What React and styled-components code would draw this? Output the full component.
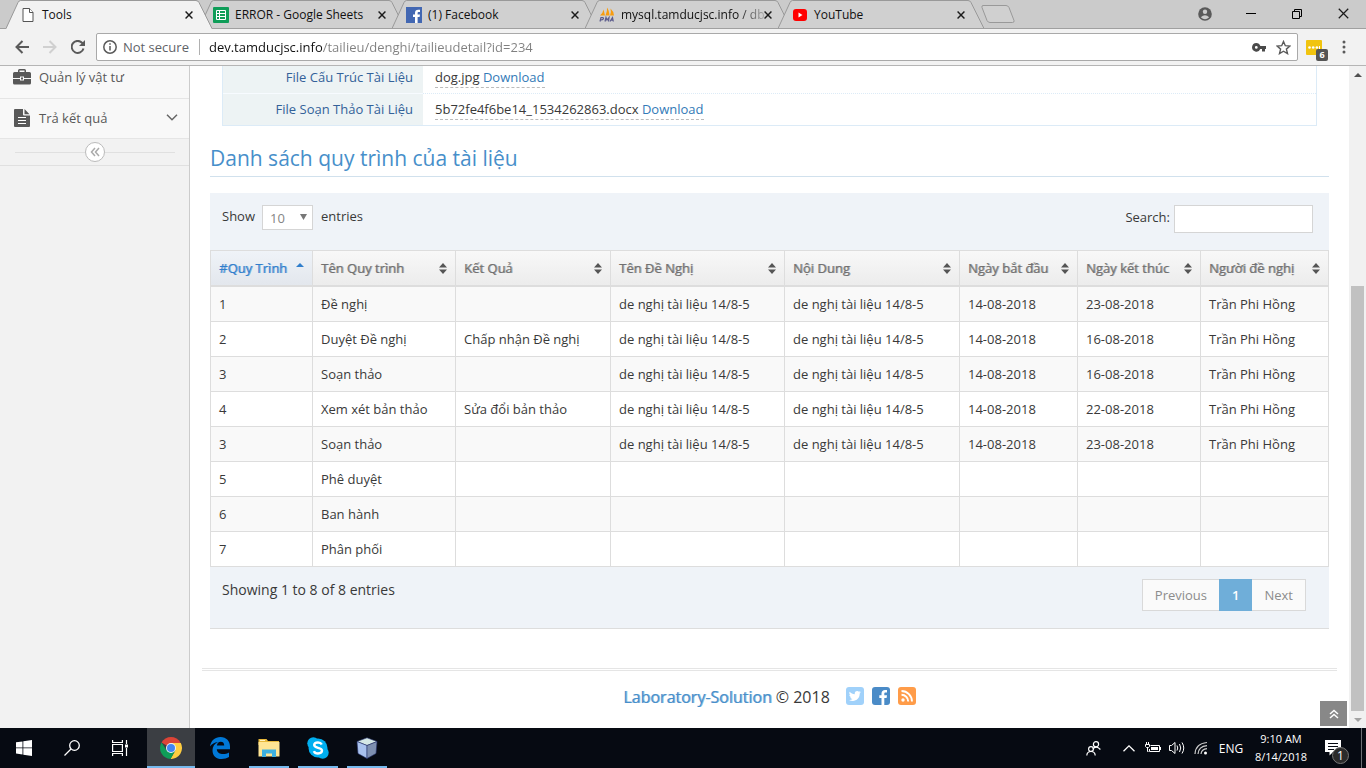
import React from 'react';
import styled, { createGlobalStyle, css } from 'styled-components';

const GlobalStyle = createGlobalStyle`
  *, *::before, *::after { box-sizing: border-box; }
  body { margin: 0; background: #fff; }
  body, button, input, select { font-family: "Open Sans", "Noto Sans", sans-serif; font-size: 13px; }
  button { border: 0; padding: 0; margin: 0; background: none; color: inherit; }
  svg { display: block; flex: none; }
`;

const Screen = styled.div`
  min-height: 100vh;
  display: flex;
  flex-direction: column;
  color: #393939;
  line-height: 20px;
`;

/* ---------- browser window ---------- */

const TabStrip = styled.header`
  display: flex;
  height: 29px;
  padding-left: 6px;
  background: #cbcbcb;
  border-bottom: 1px solid #a0a0a0;
`;

const TabBox = styled.div`
  position: relative;
  flex: 0 1 193px;
  min-width: 0;
  height: 29px;
  z-index: ${(p) => (p.$active ? 2 : 1)};
`;

const TabShape = styled.svg`
  position: absolute;
  left: 0;
  top: 0;
`;

const TabContent = styled.div`
  position: relative;
  display: flex;
  align-items: center;
  height: 29px;
  padding-left: 14px;
`;

const TabIcon = styled.span`
  width: 16px;
  margin-right: 6px;
  display: flex;
  justify-content: center;
`;

const TabButton = styled.button`
  flex: 1;
  min-width: 0;
  text-align: left;
  font-size: 12px;
  line-height: 18px;
  color: #111;
  white-space: nowrap;
  ${(p) => p.$fade && css`
    mask-image: linear-gradient(90deg, #000 116px, transparent 150px);
  `}
`;

const CloseTab = styled.button`
  width: 8px;
  margin-right: 6px;
`;

const NewTab = styled.button`
  align-self: center;
  margin-left: 10px;
`;

const WindowButtons = styled.div`
  margin-left: auto;
  display: flex;
  align-items: center;
  height: 27px;
`;

const WindowButton = styled.button`
  width: 46px;
  height: 26px;
  display: flex;
  align-items: center;
  justify-content: center;
`;

const Toolbar = styled.div`
  display: flex;
  align-items: center;
  height: 37px;
  padding: 0 20px 0 8px;
  background: #f2f2f2;
  border-bottom: 1px solid #b5b5b5;
`;

const ToolButton = styled.button`
  width: 28px;
  height: 28px;
  display: flex;
  align-items: center;
  justify-content: center;
`;

const AddressBar = styled.form`
  flex: 1;
  min-width: 0;
  display: flex;
  align-items: center;
  height: 28px;
  margin: 0 2px 0 4px;
  padding: 0 6px;
  background: #fff;
  border: 1px solid #a9a9a9;
  border-radius: 2px;
`;

const Security = styled.span`
  margin-left: 6px;
  padding-right: 10px;
  border-right: 1px solid #b0b0b0;
  line-height: 16px;
  color: #5f6368;
`;

const UrlInput = styled.input`
  flex: 1;
  min-width: 0;
  margin-left: 9px;
  padding: 0;
  border: 0;
  outline: 0;
  background: linear-gradient(90deg, #111 113px, #808080 113px);
  background-clip: text;
  color: transparent;
`;

const KeyButton = styled(ToolButton)`
  margin-right: 3px;
`;

const Extension = styled.button`
  position: relative;
  width: 16px;
  height: 15px;
  margin: 0 20px 0 6px;
  border-radius: 1px;
  background: #f1c40f;
  display: flex;
  align-items: center;
  justify-content: center;
`;

const ExtensionCount = styled.span`
  position: absolute;
  right: -6px;
  bottom: -6px;
  width: 12px;
  border-radius: 2px;
  background: #555;
  color: #fff;
  font-size: 9px;
  font-weight: 700;
  line-height: 12px;
  text-align: center;
`;

/* ---------- page ---------- */

const Page = styled.div`
  position: relative;
  flex: 1;
  display: flex;
  background: #fff;
`;

const Sidebar = styled.nav`
  width: 190px;
  flex: none;
  background: #f2f2f2;
  border-right: 1px solid #ccc;
`;

const SideLink = styled.a`
  display: flex;
  align-items: center;
  height: ${(p) => (p.$cut ? 33 : 40)}px;
  padding: 0 11px 0 13px;
  padding-bottom: ${(p) => (p.$cut ? 11 : 2)}px;
  background: #f8f8f8;
  border-bottom: 1px solid #e5e5e5;
  color: #585858;
  text-decoration: none;
`;

const SideIcon = styled.span`
  width: 18px;
  display: flex;
  justify-content: center;
  margin-right: 8px;
`;

const SideText = styled.span`
  flex: 1;
`;

const CollapseBar = styled.div`
  display: flex;
  align-items: center;
  height: 27px;
  padding: 0 14px 0 15px;
  border-bottom: 1px solid #e0e0e0;
  &::before, &::after {
    content: "";
    flex: 1;
    height: 1px;
    background: #e0e0e0;
  }
`;

const CollapseButton = styled.button`
  width: 20px;
  height: 20px;
  border: 1px solid #bbb;
  border-radius: 50%;
  background: #fff;
  display: flex;
  align-items: center;
  justify-content: center;
`;

const Main = styled.main`
  flex: 1;
  min-width: 0;
  padding: 0 12px;
`;

const Body = styled.div`
  padding: 0 8px;
`;

const Profile = styled.dl`
  margin: 0 12px;
  border: 1px solid #dcebf7;
  border-top: 0;
`;

const ProfileRow = styled.div`
  display: flex;
  height: ${(p) => (p.$cut ? 28 : 31)}px;
  align-items: stretch;
`;

const ProfileName = styled.dt`
  width: 200px;
  padding: ${(p) => (p.$cut ? 1 : 5)}px 10px 0 0;
  background: #edf3f4;
  border-bottom: ${(p) => (p.$cut ? '1px solid #f7fbff' : '0')};
  color: #336199;
  text-align: right;
`;

const ProfileValue = styled.dd`
  flex: 1;
  margin: 0;
  padding: ${(p) => (p.$cut ? 1 : 5)}px 12px 0;
  border-bottom: ${(p) => (p.$cut ? '1px dotted #dcebf7' : '0')};
`;

const Editable = styled.span`
  display: inline-block;
  border-bottom: 1px dashed #bbb;
  line-height: 19px;
`;

const Link = styled.a`
  color: #337ab7;
  text-decoration: none;
`;

const Title = styled.h3`
  margin: 0 0 16px;
  padding: 14px 0 0;
  height: 51px;
  border-bottom: 1px solid #d1e1ed;
  color: #478fca;
  font-size: 21px;
  font-weight: 400;
  line-height: 36px;
`;

const Panel = styled.section`
  background: #eff3f8;
`;

const Filters = styled.div`
  display: flex;
  justify-content: space-between;
  align-items: flex-start;
  height: 57px;
  padding: 12px 16px 0 12px;
`;

const Length = styled.label`
  display: flex;
  align-items: flex-start;
  line-height: 22px;
`;

const SelectBox = styled.span`
  position: relative;
  margin: 0 8px 0 7px;
  svg { position: absolute; right: 6px; top: 9px; pointer-events: none; }
`;

const Select = styled.select`
  appearance: none;
  display: block;
  width: 51px;
  height: 25px;
  padding: 0 0 0 7px;
  border: 1px solid #d5d5d5;
  border-radius: 0;
  background: #fff;
  color: #858585;
`;

const Search = styled.label`
  display: flex;
  align-items: flex-start;
  gap: 4px;
  line-height: 24px;
`;

const SearchInput = styled.input`
  width: 139px;
  height: 28px;
  padding: 0 6px;
  border: 1px solid #d5d5d5;
  color: #858585;
`;

const Table = styled.table`
  width: 100%;
  table-layout: fixed;
  border-collapse: separate;
  border-spacing: 0;
  border-left: 1px solid #ddd;
  background: #fff;
`;

const Head = styled.th`
  height: 37px;
  padding: 0 8px;
  border: solid #ddd;
  border-width: 1px 1px 2px 0;
  background: ${(p) => (p.$sorted ? 'linear-gradient(#eff3f8, #e3e7ed)' : 'linear-gradient(#f8f8f8, #ececec)')};
  color: ${(p) => (p.$sorted ? '#307ecc' : '#707070')};
`;

const SortButton = styled.button`
  width: 100%;
  display: flex;
  align-items: center;
  justify-content: space-between;
  line-height: 18px;
  white-space: nowrap;
  text-shadow: 1px 0 0 ${(p) => (p.$sorted ? 'rgba(48,126,204,.6)' : 'rgba(112,112,112,.6)')};
`;

const Row = styled.tr`
  background: ${(p) => (p.$odd ? '#f9f9f9' : '#fff')};
`;

const Cell = styled.td`
  height: 35px;
  padding: 0 8px;
  border: solid #ddd;
  border-width: 0 1px 1px 0;
  white-space: nowrap;
`;

const PanelFoot = styled.div`
  display: flex;
  justify-content: space-between;
  align-items: flex-start;
  height: 62px;
  padding: 12px 23px 0 12px;
  border-bottom: 1px solid #ddd;
`;

const Info = styled.div`
  font-size: 14px;
  line-height: 22px;
`;

const Pager = styled.div`
  display: flex;
`;

const PageButton = styled.button`
  height: 32px;
  padding: 0 12px;
  border: 1px solid ${(p) => (p.$active ? '#6faed9' : '#d9d9d9')};
  border-left-width: ${(p) => (p.$first || p.$active ? 1 : 0)}px;
  border-right-width: ${(p) => (p.$first ? 0 : 1)}px;
  background: ${(p) => (p.$active ? '#6faed9' : '#fafafa')};
  color: ${(p) => (p.$active ? '#fff' : '#8c8c8c')};
  font-weight: ${(p) => (p.$active ? 600 : 400)};
`;

const Footer = styled.footer`
  display: flex;
  align-items: center;
  justify-content: center;
  margin-top: 39px;
  padding-top: 14px;
  border-top: 3px double #e5e5e5;
  font-size: 16px;
  line-height: 24px;
`;

const Brand = styled.span`
  margin-right: 4px;
  color: #478fca;
  text-shadow: 1px 0 0 rgba(71, 143, 202, 0.6);
`;

const Social = styled.span`
  display: flex;
  gap: 8px;
  margin-left: 16px;
`;

const SocialLink = styled.a`
  display: block;
  width: 18px;
  height: 18px;
  margin-top: -2px;
`;

const ToTop = styled.button`
  position: absolute;
  right: 19px;
  bottom: 2px;
  width: 27px;
  height: 25px;
  background: #888;
  display: flex;
  align-items: center;
  justify-content: center;
`;

const ScrollTrack = styled.div`
  width: 17px;
  flex: none;
  display: flex;
  flex-direction: column;
  align-items: center;
  background: #f1f1f1;
`;

const ScrollArrow = styled.span`
  height: 17px;
  display: flex;
  align-items: center;
`;

const ScrollGap = styled.div`
  flex: 203;
`;

const ScrollThumb = styled.div`
  flex: 425;
  width: 13px;
  background: #c1c1c1;
`;

/* ---------- taskbar ---------- */

const Taskbar = styled.footer`
  display: flex;
  height: 40px;
  background: #060a12;
  color: #fff;
`;

const TaskButton = styled.button`
  width: 48px;
  height: 40px;
  display: flex;
  align-items: center;
  justify-content: center;
  background: ${(p) => (p.$active ? '#3b3e43' : 'transparent')};
`;

const TaskApps = styled.div`
  display: flex;
  gap: 1px;
  margin-left: 3px;
`;

const AppButton = styled(TaskButton)`
  position: relative;
  &::after {
    content: "";
    position: absolute;
    left: ${(p) => (p.$active ? 0 : 4)}px;
    right: ${(p) => (p.$active ? 0 : 4)}px;
    bottom: 0;
    height: 2px;
    background: ${(p) => (p.$running ? '#76b9ed' : 'transparent')};
  }
`;

const Tray = styled.div`
  display: flex;
  align-items: center;
  margin-left: auto;
`;

const TrayButton = styled.button`
  width: 24px;
  height: 40px;
  display: flex;
  align-items: center;
  justify-content: center;
`;

const People = styled(TrayButton)`
  margin-right: 12px;
`;

const Language = styled.button`
  width: 36px;
  font-size: 12px;
`;

const Clock = styled.button`
  width: 64px;
  font-size: 11px;
  line-height: 18px;
`;

const Notices = styled.button`
  position: relative;
  width: 40px;
  height: 40px;
  display: flex;
  align-items: center;
  justify-content: center;
`;

const NoticeCount = styled.span`
  position: absolute;
  left: 19px;
  top: 19px;
  width: 17px;
  height: 17px;
  border: 1px solid #777;
  border-radius: 50%;
  background: #2b2b2b;
  font-size: 12px;
  line-height: 15px;
`;

const DesktopEdge = styled.div`
  width: 5px;
  height: 40px;
  margin-left: 8px;
  border-left: 1px solid #6c6f74;
`;

/* ---------- drawings ---------- */

const FileFavicon = () => (
  <svg width="12" height="14" viewBox="0 0 12 14" fill="#fff" stroke="#555"><path d="M1 .5h6.500l3.500 4v9H1z" /><path d="M7.500.5v4H11" /></svg>
);
const SheetsFavicon = () => (
  <svg width="16" height="16" viewBox="0 0 16 16"><rect width="16" height="16" rx="1" fill="#0f9d58" /><path d="M3.500 3.500h9v9h-9zM3 6.500h10M3 9.500h10M6.500 3v10" fill="none" stroke="#fff" /></svg>
);
const FacebookFavicon = () => (
  <svg width="16" height="16" viewBox="0 0 16 16"><rect width="16" height="16" fill="#4267b2" /><path d="M9 16V10H7V7.500h2V6c0-2.300 1.200-3.300 3.200-3.300h1.800v2.400h-1.200c-.9 0-1.200.4-1.200 1.200v1.200H14L13.600 10h-2v6z" fill="#fff" /></svg>
);
const PmaFavicon = () => (
  <svg width="16" height="16" viewBox="0 0 16 16">
    <path d="M1 8.500Q4 6 4.500 2.500L6 8.500zM6.500 8.500Q8.500 4 8 .5Q10 3 10.500 8.500zM11 8.500Q12.500 5 11.500 1.500Q14.500 4 15 8.500z" fill="#f89c0e" />
    <path d="M1 14.500l1-4h1.500q1.500.2.800 1.400T1.800 13M6 14.500l1-4 1 2.500 2-2.500-.5 4M11 14.500l2.500-4 .8 4M12 13.200h2.300" fill="none" stroke="#5b5b8c" strokeWidth="1.200" />
  </svg>
);
const YoutubeFavicon = () => (
  <svg width="16" height="12" viewBox="0 0 16 12"><rect x="1" width="14" height="12" rx="3" fill="#f00" /><path d="M6.500 3.500v5L10.500 6z" fill="#fff" /></svg>
);
const Cross = ({ size = 8, width = 1.8 }) => (
  <svg width={size} height={size} viewBox="0 0 10 10" stroke="#1b1b1b" strokeWidth={width}><path d="M.7.7l8.600 8.600M9.300.7L.7 9.300" /></svg>
);
const DoubleChevron = ({ color, up }) => (
  <svg width="10" height="10" viewBox="0 0 10 10" fill="none" stroke={color} strokeWidth="1.500">
    {up ? <path d="M1 5l4-3.500L9 5M1 9l4-3.500L9 9" /> : <path d="M5 1L1.500 5 5 9M9 1L5.500 5 9 9" />}
  </svg>
);
const SortIcon = ({ sorted }) => (
  <svg width="8" height="11" viewBox="0 0 8 11" fill={sorted ? '#307ecc' : '#555'}>
    {sorted ? <path d="M0 4L4 0l4 4z" /> : <path d="M0 4.500L4 0l4 4.500zM0 6.500h8L4 11z" />}
  </svg>
);
const Triangle = ({ up, color }) => (
  <svg width="8" height="4" viewBox="0 0 8 4" fill={color}><path d={up ? 'M0 4L4 0l4 4z' : 'M0 0h8L4 4z'} /></svg>
);
const SelectArrow = () => (
  <svg width="7" height="6" viewBox="0 0 7 6" fill="#777"><path d="M0 0h7L3.500 6z" /></svg>
);

const EdgeLogo = () => (
  <svg width="20" height="22" viewBox="0 0 20 22"><path d="M0 9.500C1 3.500 5 0 10.500 0 16.500 0 20 4.300 20 9.500v2.800H6.800c.3 3.400 3.200 4.800 6.200 4.800 2.300 0 4.200-.6 6-1.700v4.700c-2 1.200-4.600 1.900-7.300 1.900C6 22 2.500 18.600 2.500 13.200 2.500 9.500 4.500 6.500 8 4.900 4.500 5.200 1.800 6.900 0 9.500zM6.900 8.600h7.300c0-2.300-1-3.900-3.500-3.900-2.100 0-3.500 1.600-3.800 3.900z" fill="#0078d7" /></svg>
);
const ChromeLogo = () => (
  <svg width="22" height="22" viewBox="0 0 22 22">
    <path d="M11 11L1.500 5.500A11 11 0 0 1 20.500 5.500z" fill="#db4437" />
    <path d="M11 11V6h9.800A11 11 0 0 1 10.500 22L15.300 13.500z" fill="#ffcd40" />
    <path d="M11 11l4.300 2.500L10.500 22A11 11 0 0 1 1.500 5.500L6.700 13.500z" fill="#0f9d58" />
    <circle cx="11" cy="11" r="5" fill="#f1f1f1" /><circle cx="11" cy="11" r="4" fill="#4285f4" />
  </svg>
);
const ExplorerLogo = () => (
  <svg width="22" height="18" viewBox="0 0 22 18">
    <path d="M.5 0h8l1.500 2H21v4H.5z" fill="#e8b93c" /><path d="M.5 3h21v14.500H.5z" fill="#ffe594" />
    <path d="M4 18v-7.500h14V18h-4v-3.500H8V18z" fill="#3eb1e0" /><path d="M2 1.500h5" stroke="#fff3c0" />
  </svg>
);
const SkypeLogo = () => (
  <svg width="22" height="22" viewBox="0 0 22 22">
    <circle cx="11" cy="11" r="9.500" fill="#00aff0" /><circle cx="6.300" cy="6.300" r="6" fill="#00aff0" /><circle cx="15.700" cy="15.700" r="6" fill="#00aff0" />
    <path d="M14.800 7.500C14 6 12.800 5.500 11 5.500c-2.200 0-3.800.9-3.800 2.600 0 3.500 7.800 1.900 7.800 5.500 0 1.900-1.800 2.900-4 2.900-2.100 0-3.500-.8-4.100-2.400" fill="none" stroke="#fff" strokeWidth="2.400" />
  </svg>
);
const BoxLogo = () => (
  <svg width="22" height="22" viewBox="0 0 22 22" stroke="#26336b" strokeWidth=".6">
    <path d="M1 4.500L11 .8l10 3.700L11 8.500z" fill="#d5e8e6" /><path d="M1 4.500L11 8.500V21.500L2 16.500z" fill="#a9c2ee" /><path d="M21 4.500L11 8.500V21.500l9-5z" fill="#7d8fb0" />
  </svg>
);

/* ---------- data ---------- */

const tabs = [
  { title: 'Tools', icon: <FileFavicon />, active: true },
  { title: 'ERROR - Google Sheets', icon: <SheetsFavicon /> },
  { title: '(1) Facebook', icon: <FacebookFavicon /> },
  { title: 'mysql.tamducjsc.info / db', icon: <PmaFavicon />, fade: true },
  { title: 'YouTube', icon: <YoutubeFavicon /> },
];

const columns = [
  ['#Quy Trình', 102], ['Tên Quy trình', 143], ['Kết Quả', 155], ['Tên Đề Nghị', 174],
  ['Nội Dung', 175], ['Ngày bắt đầu', 118], ['Ngày kết thúc', 123], ['Người đề nghị', 128],
];

const doc = 'de nghị tài liệu 14/8-5';
const who = 'Trần Phi Hồng';
const rows = [
  ['1', 'Đề nghị', '', doc, doc, '14-08-2018', '23-08-2018', who],
  ['2', 'Duyệt Đề nghị', 'Chấp nhận Đề nghị', doc, doc, '14-08-2018', '16-08-2018', who],
  ['3', 'Soạn thảo', '', doc, doc, '14-08-2018', '16-08-2018', who],
  ['4', 'Xem xét bản thảo', 'Sửa đổi bản thảo', doc, doc, '14-08-2018', '22-08-2018', who],
  ['3', 'Soạn thảo', '', doc, doc, '14-08-2018', '23-08-2018', who],
  ['5', 'Phê duyệt', '', '', '', '', '', ''],
  ['6', 'Ban hành', '', '', '', '', '', ''],
  ['7', 'Phân phối', '', '', '', '', '', ''],
];

function BrowserTab({ title, icon, active, fade }) {
  return (
    <TabBox $active={active}>
      <TabShape width="207" height="29" viewBox="0 0 207 29" fill={active ? '#f2f2f2' : '#d0d0d0'}>
        <path d="M0 29L12 2.500Q13 1 14.500 1H190Q192 1 193 2.500L206 29z" />
        <path d="M0 28.500L12 2.500Q13 .5 14.500 .5H190Q192 .5 193 2.500L206 28.500" fill="none" stroke="#999" />
        {!active && <path d="M0 28.500h207" stroke="#a0a0a0" />}
      </TabShape>
      <TabContent>
        <TabIcon>{icon}</TabIcon>
        <TabButton $fade={fade}>{title}</TabButton>
        <CloseTab aria-label={`Close ${title}`}><Cross /></CloseTab>
      </TabContent>
    </TabBox>
  );
}

function Browser() {
  return (
    <>
      <TabStrip>
        {tabs.map((t) => <BrowserTab key={t.title} {...t} />)}
        <NewTab aria-label="New tab">
          <svg width="34" height="18" viewBox="0 0 34 18" fill="#d0d0d0" stroke="#999"><path d="M2 .5h23q2 0 3 2l5 13q.5 2-1.500 2H9q-2 0-3-2l-5-13Q.5.5 2 .5z" /></svg>
        </NewTab>
        <WindowButtons>
          <WindowButton aria-label="Profile">
            <svg width="14" height="14" viewBox="0 0 14 14"><circle cx="7" cy="7" r="6.800" fill="#5a5a5a" /><circle cx="7" cy="4.800" r="2.200" fill="#cbcbcb" /><path d="M2.800 10.300q4.200-4 8.400 0Q7 14 2.800 10.300z" fill="#cbcbcb" /></svg>
          </WindowButton>
          <WindowButton aria-label="Minimize"><svg width="10" height="1" viewBox="0 0 10 1"><path d="M0 .5h10" stroke="#000" /></svg></WindowButton>
          <WindowButton aria-label="Restore"><svg width="10" height="10" viewBox="0 0 10 10" fill="none" stroke="#000"><path d="M.5 2.500h7v7h-7zM2.500 2.500v-2h7v7h-2" /></svg></WindowButton>
          <WindowButton aria-label="Close"><Cross size={11} width={1.1} /></WindowButton>
        </WindowButtons>
      </TabStrip>
      <Toolbar>
        <ToolButton aria-label="Back"><svg width="14" height="14" viewBox="0 0 14 14" fill="none" stroke="#5a5a5a" strokeWidth="2"><path d="M14 7H1.500M7.500 1L1.500 7l6 6" /></svg></ToolButton>
        <ToolButton aria-label="Forward"><svg width="14" height="14" viewBox="0 0 14 14" fill="none" stroke="#d0d0d0" strokeWidth="2"><path d="M0 7h12.500M6.500 1l6 6-6 6" /></svg></ToolButton>
        <ToolButton aria-label="Reload"><svg width="14" height="14" viewBox="0 0 14 14" fill="none" stroke="#5a5a5a" strokeWidth="2"><path d="M12.500 8.500A6 6 0 1 1 11 2.700L12.500 4.500" /><path d="M14 0v6H8z" fill="#5a5a5a" stroke="none" /></svg></ToolButton>
        <AddressBar onSubmit={(e) => e.preventDefault()}>
          <svg width="14" height="14" viewBox="0 0 14 14" fill="none" stroke="#5a5a5a" strokeWidth="1.500"><circle cx="7" cy="7" r="6.200" /><path d="M7 6v4.500M7 3.300v1.500" /></svg>
          <Security>Not secure</Security>
          <UrlInput aria-label="Address" defaultValue="dev.tamducjsc.info/tailieu/denghi/tailieudetail?id=234" />
          <KeyButton type="button" aria-label="Passwords"><svg width="14" height="9" viewBox="0 0 14 9"><path d="M4.300 0a4.300 4.300 0 0 1 4 3H14v3h-1v2.500h-3V6H8.300A4.300 4.300 0 1 1 4.300 0zm0 3a1.400 1.400 0 1 0 0 2.800 1.400 1.400 0 0 0 0-2.800z" fill="#4a4a4a" fillRule="evenodd" /></svg></KeyButton>
          <svg width="15" height="15" viewBox="0 0 15 15" fill="none" stroke="#5a5a5a" strokeWidth="1.400"><path d="M7.500 1.500l1.800 4.200 4.600.4-3.500 3 1.100 4.500-4-2.400-4 2.400 1.100-4.500-3.500-3 4.600-.4z" /></svg>
        </AddressBar>
        <Extension aria-label="Extension">
          <svg width="12" height="3" viewBox="0 0 12 3" fill="#fff"><circle cx="1.500" cy="1.500" r="1.300" /><circle cx="5.200" cy="1.500" r="1.300" /><circle cx="8.900" cy="1.500" r="1.300" /><path d="M11 0h1v3h-1z" /></svg>
          <ExtensionCount>6</ExtensionCount>
        </Extension>
        <button aria-label="Menu"><svg width="4" height="14" viewBox="0 0 4 14" fill="#5a5a5a"><circle cx="2" cy="2" r="1.500" /><circle cx="2" cy="7" r="1.500" /><circle cx="2" cy="12" r="1.500" /></svg></button>
      </Toolbar>
    </>
  );
}

function SideNav() {
  return (
    <Sidebar>
      <SideLink href="#vat-tu" $cut>
        <SideIcon><svg width="18" height="16" viewBox="0 0 18 16" fill="#585858"><path d="M5 3V1.500Q5 0 6.500 0h5Q13 0 13 1.500V3h3.500Q18 3 18 4.500V9h-7V7.500H7V9H0V4.500Q0 3 1.500 3zm1.500 0h5V1.500h-5zM0 10h7v1.500h4V10h7v4q0 1.500-1.500 1.500h-15Q0 15.500 0 14zM8 8.500h2v2H8z" fillRule="evenodd" /></svg></SideIcon>
        <SideText>Quản lý vật tư</SideText>
      </SideLink>
      <SideLink href="#ket-qua">
        <SideIcon><svg width="16" height="18" viewBox="0 0 16 18" fill="#585858"><path d="M1 0h8v5.500Q9 6.500 10 6.500h6V17q0 1-1 1H1q-1 0-1-1V1Q0 0 1 0zm9.500 0L15.500 5.200h-5z" /><path d="M4 8.500h8M4 11.500h8M4 14.500h8" stroke="#fff" /></svg></SideIcon>
        <SideText>Trả kết quả</SideText>
        <svg width="12" height="7" viewBox="0 0 12 7" fill="none" stroke="#666" strokeWidth="1.500"><path d="M1 .8l5 5 5-5" /></svg>
      </SideLink>
      <CollapseBar><CollapseButton aria-label="Collapse menu"><DoubleChevron color="#aaa" /></CollapseButton></CollapseBar>
    </Sidebar>
  );
}

function ProcessTable() {
  return (
    <Table>
      <colgroup>{columns.map(([name, w]) => <col key={name} width={w} />)}</colgroup>
      <thead>
        <tr>
          {columns.map(([name], i) => (
            <Head key={name} scope="col" $sorted={i === 0}>
              <SortButton $sorted={i === 0}>{name}<SortIcon sorted={i === 0} /></SortButton>
            </Head>
          ))}
        </tr>
      </thead>
      <tbody>
        {rows.map((r, i) => (
          <Row key={i} $odd={i % 2 === 0}>{r.map((c, j) => <Cell key={j}>{c}</Cell>)}</Row>
        ))}
      </tbody>
    </Table>
  );
}

function PageFooter() {
  return (
    <Footer>
      <Brand>Laboratory-Solution</Brand> © 2018
      <Social>
        <SocialLink href="#twitter" aria-label="Twitter"><svg width="18" height="18" viewBox="0 0 18 18"><rect width="18" height="18" rx="3" fill="#a0d1fa" /><path d="M15 5.300l-1.300 1.300c.1 4.200-2.900 7.400-6.900 7.400-1.400 0-2.700-.4-3.800-1.100 1.300.1 2.500-.2 3.500-1-1.100 0-2-.8-2.300-1.700h1c-1.100-.3-1.900-1.200-1.900-2.400l1.100.3C3.300 7.300 3 5.900 3.700 4.800c1.300 1.500 3 2.400 5.100 2.500C8.300 5 9.700 3.900 11.200 3.900c.7 0 1.300.3 1.800.8l1.600-.6-1.100 1.400z" fill="#fff" /></svg></SocialLink>
        <SocialLink href="#facebook" aria-label="Facebook"><svg width="18" height="18" viewBox="0 0 18 18"><rect width="18" height="18" rx="3" fill="#4a8bc7" /><path d="M9.500 18v-7H7.300V8.300h2.200V6.500c0-2.400 1.400-3.600 3.500-3.600h2v2.600h-1.300c-1.100 0-1.400.5-1.400 1.400v1.400H15l-.4 2.700h-2.300v7z" fill="#fff" /></svg></SocialLink>
        <SocialLink href="#rss" aria-label="RSS"><svg width="18" height="18" viewBox="0 0 18 18"><rect width="18" height="18" rx="3" fill="#ff9c49" /><circle cx="5" cy="13" r="1.700" fill="#fff" /><path d="M3.500 7.800a6.700 6.700 0 0 1 6.700 6.700M3.500 4a10.500 10.500 0 0 1 10.500 10.500" fill="none" stroke="#fff" strokeWidth="1.900" /></svg></SocialLink>
      </Social>
    </Footer>
  );
}

function WindowsTaskbar() {
  return (
    <Taskbar>
      <TaskButton aria-label="Start"><svg width="16" height="16" viewBox="0 0 16 16" fill="#fff"><path d="M0 2.300l6.500-.9v6.100H0zM7.300 1.300L16 0v7.500H7.300zM0 8.300h6.500v6.200L0 13.600zM7.300 8.300H16V16l-8.700-1.300z" /></svg></TaskButton>
      <TaskButton aria-label="Search"><svg width="16" height="16" viewBox="0 0 16 16" fill="none" stroke="#fff" strokeWidth="1.300"><circle cx="10.500" cy="5.500" r="4.800" /><path d="M7 9L.5 15.500" /></svg></TaskButton>
      <TaskButton aria-label="Task view"><svg width="16" height="16" viewBox="0 0 16 16" fill="none" stroke="#fff" strokeWidth="1.200"><path d="M.6 4.500h9.800v7H.6zM.6 0v2.500h9.800V0M.6 16v-2.500h9.800V16M14.500 0v4M14.500 8v8" /><path d="M13 4.500h3v3h-3z" fill="#fff" stroke="none" /></svg></TaskButton>
      <TaskApps>
        <AppButton aria-label="Chrome" $active $running><ChromeLogo /></AppButton>
        <AppButton aria-label="Edge"><EdgeLogo /></AppButton>
        <AppButton aria-label="File Explorer" $running><ExplorerLogo /></AppButton>
        <AppButton aria-label="Skype" $running><SkypeLogo /></AppButton>
        <AppButton aria-label="VirtualBox" $running><BoxLogo /></AppButton>
      </TaskApps>
      <Tray>
        <People aria-label="People"><svg width="15" height="15" viewBox="0 0 15 15" fill="none" stroke="#fff" strokeWidth="1.200"><circle cx="10" cy="3.200" r="2.600" /><path d="M6.800 8Q10 4 14.400 8.500" /><circle cx="5" cy="8" r="2.400" /><path d="M.8 14.500Q1 10.500 5 10.500t4.200 4" /></svg></People>
        <TrayButton aria-label="Hidden icons"><svg width="12" height="7" viewBox="0 0 12 7" fill="none" stroke="#fff" strokeWidth="1.300"><path d="M.5 6.300L6 .9l5.500 5.400" /></svg></TrayButton>
        <TrayButton aria-label="Battery"><svg width="16" height="12" viewBox="0 0 16 12" fill="none" stroke="#fff"><path d="M5.500 3.500h9v6H4.500V7M1.500 0v2.500M3.500 0v2.500M.5 2.500h4v2l-1 1H1.500l-1-1zM2.500 5.500v4h1" /><path d="M6 5h7v3H6zM15 5h1v3h-1z" fill="#fff" stroke="none" /></svg></TrayButton>
        <TrayButton aria-label="Volume"><svg width="17" height="14" viewBox="0 0 17 14" fill="none" stroke="#fff"><path d="M.5 4.500h2L6 1.500v11l-3.500-3h-2zM8 4.500q1.500 2.500 0 5M10.500 3q2.500 4 0 8M13 1.500q3.500 5.500 0 11" /></svg></TrayButton>
        <TrayButton aria-label="Network"><svg width="14" height="14" viewBox="0 0 14 14" fill="none" stroke="#ccc" strokeWidth="1.200"><path d="M1 13Q1.500 2.500 13 1.500M4 13Q4.500 5.500 13 4.700M7 13q.5-4.800 6-5.300" /><circle cx="11.500" cy="12" r="1.500" fill="#fff" stroke="none" /></svg></TrayButton>
        <Language>ENG</Language>
        <Clock>9:10 AM<br />8/14/2018</Clock>
        <Notices aria-label="Notifications">
          <svg width="16" height="16" viewBox="0 0 16 16"><path d="M0 0h16v12H8l-3.500 3.500V12H0z" fill="#fff" /><path d="M3 3.500h10M3 6.500h10M3 9.500h6" stroke="#060a12" /></svg>
          <NoticeCount>1</NoticeCount>
        </Notices>
        <DesktopEdge />
      </Tray>
    </Taskbar>
  );
}

export default function App() {
  return (
    <Screen>
      <GlobalStyle />
      <Browser />
      <Page>
        <SideNav />
        <Main>
          <Body>
            <Profile>
              <ProfileRow $cut>
                <ProfileName $cut>File Cấu Trúc Tài Liệu</ProfileName>
                <ProfileValue $cut><Editable>dog.jpg <Link href="#dog">Download</Link></Editable></ProfileValue>
              </ProfileRow>
              <ProfileRow>
                <ProfileName>File Soạn Thảo Tài Liệu</ProfileName>
                <ProfileValue><Editable>5b72fe4f6be14_1534262863.docx <Link href="#docx">Download</Link></Editable></ProfileValue>
              </ProfileRow>
            </Profile>
            <Title>Danh sách quy trình của tài liệu</Title>
            <Panel>
              <Filters>
                <Length>
                  Show
                  <SelectBox><Select defaultValue="10"><option>10</option><option>25</option><option>50</option></Select><SelectArrow /></SelectBox>
                  entries
                </Length>
                <Search>Search:<SearchInput type="search" /></Search>
              </Filters>
              <ProcessTable />
              <PanelFoot>
                <Info>Showing 1 to 8 of 8 entries</Info>
                <Pager>
                  <PageButton $first>Previous</PageButton>
                  <PageButton $active>1</PageButton>
                  <PageButton>Next</PageButton>
                </Pager>
              </PanelFoot>
            </Panel>
          </Body>
          <PageFooter />
        </Main>
        <ScrollTrack>
          <ScrollArrow><Triangle up color="#505050" /></ScrollArrow>
          <ScrollGap />
          <ScrollThumb />
          <ScrollArrow><Triangle color="#a3a3a3" /></ScrollArrow>
        </ScrollTrack>
        <ToTop aria-label="Back to top"><DoubleChevron color="#fff" up /></ToTop>
      </Page>
      <WindowsTaskbar />
    </Screen>
  );
}
